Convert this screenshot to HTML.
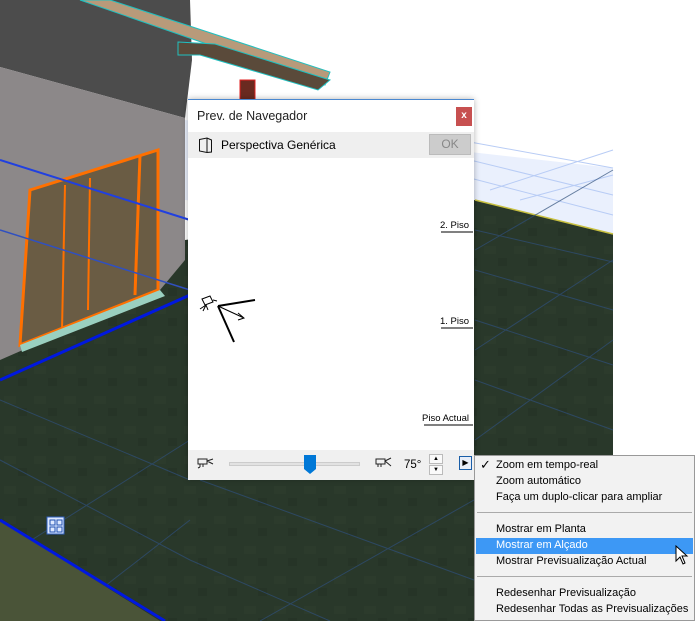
<!DOCTYPE html>
<html><head><meta charset="utf-8"><style>
*{margin:0;padding:0;box-sizing:border-box}
body{width:695px;height:621px;overflow:hidden;position:relative;background:#fff;font-family:"Liberation Sans","DejaVu Sans",sans-serif;font-size:12px;color:#000}
.abs{position:absolute}
.menu div.it{position:absolute;left:21px;font-size:11px;white-space:nowrap}
</style></head><body>
<svg class="abs" style="left:0;top:0" width="695" height="621">
<defs>
<pattern id="g" width="30" height="30" patternUnits="userSpaceOnUse"><rect width="30" height="30" fill="#29382a"/><rect x="4" y="6" width="12" height="8" fill="#2c3b2c"/><rect x="18" y="18" width="9" height="8" fill="#263427"/></pattern>
</defs>
<!-- light blue floor -->
<polygon points="185,120 613,168 613,240 185,200" fill="#eaf0fd"/>
<g stroke="#b8ccf5" stroke-width="1">
<line x1="470" y1="142" x2="613" y2="168"/><line x1="470" y1="160" x2="613" y2="195"/><line x1="470" y1="178" x2="613" y2="215"/><line x1="520" y1="200" x2="613" y2="175"/><line x1="490" y1="190" x2="613" y2="150"/>
</g>
<!-- grass -->
<polygon points="0,330 185,240 475,200 613,234 613,455 474,455 474,621 0,621" fill="url(#g)"/>
<line x1="475" y1="200" x2="613" y2="234" stroke="#c8c040" stroke-width="1.5"/>
<g stroke="#2f4f7a" stroke-width="1" opacity=".7">
<line x1="475" y1="230" x2="613" y2="262"/><line x1="475" y1="270" x2="613" y2="310"/><line x1="475" y1="320" x2="613" y2="365"/><line x1="475" y1="380" x2="613" y2="430"/><line x1="475" y1="250" x2="613" y2="170"/><line x1="475" y1="350" x2="613" y2="260"/><line x1="475" y1="440" x2="613" y2="340"/>
<line x1="0" y1="460" x2="190" y2="560"/><line x1="0" y1="400" x2="190" y2="480"/><line x1="60" y1="621" x2="190" y2="520"/><line x1="0" y1="560" x2="190" y2="440"/><line x1="200" y1="480" x2="474" y2="580"/><line x1="190" y1="560" x2="330" y2="621"/><line x1="260" y1="621" x2="474" y2="500"/>
</g>
<polygon points="0,520 160,621 0,621" fill="#4a5438"/>
<line x1="0" y1="520" x2="165" y2="621" stroke="#0018e0" stroke-width="3"/>
<!-- house -->
<polygon points="0,0 190,0 192,60 185,118 0,67" fill="#4c4c4c"/>
<polygon points="0,67 185,118 185,260 160,290 0,360" fill="#8c8889"/>
<polygon points="30,190 158,150 158,290 20,345" fill="#6a5c44"/>
<polygon points="30,190 158,150 158,290 20,345" fill="none" stroke="#ff7000" stroke-width="3"/>
<line x1="65" y1="185" x2="62" y2="330" stroke="#ff7000" stroke-width="2"/><line x1="90" y1="178" x2="88" y2="310" stroke="#ff7000" stroke-width="2"/><line x1="140" y1="155" x2="135" y2="295" stroke="#ff7000" stroke-width="3"/>
<polygon points="20,345 160,290 165,296 22,352" fill="#9ad0c0"/>
<line x1="0" y1="380" x2="190" y2="295" stroke="#0018e0" stroke-width="3"/>
<line x1="0" y1="160" x2="190" y2="220" stroke="#2040e0" stroke-width="2"/>
<line x1="0" y1="230" x2="190" y2="290" stroke="#3050c0" stroke-width="1.5"/>
<!-- roof -->
<polygon points="80,0 110,0 330,72 325,85" fill="#b89a7a" stroke="#20c0c0" stroke-width="1"/>
<polygon points="178,42 215,44 330,80 318,90 200,55 178,55" fill="#5a4a3a" stroke="#20c0c0" stroke-width="1"/>
<rect x="240" y="80" width="15" height="22" fill="#6a2a20" stroke="#e02020" stroke-width="1"/>
<rect x="47" y="517" width="17" height="17" fill="#dde8ff" stroke="#3060c0"/>
<rect x="50" y="520" width="5" height="5" fill="none" stroke="#2050b0"/><rect x="57" y="520" width="5" height="5" fill="none" stroke="#2050b0"/><rect x="50" y="527" width="5" height="5" fill="none" stroke="#2050b0"/><rect x="57" y="527" width="5" height="5" fill="none" stroke="#2050b0"/>
</svg>

<!-- dialog -->
<div class="abs" style="left:188px;top:99px;width:286px;height:380px;background:#fff;border-top:1px solid #4a88d0;box-shadow:0 0 6px rgba(0,0,0,.3)">
 <div class="abs" style="left:9px;top:9px;font-size:12.5px;color:#222">Prev. de Navegador</div>
 <div class="abs" style="left:268px;top:7px;width:16px;height:19px;background:#c75050;color:#fff;font-size:10px;font-weight:bold;text-align:center;line-height:18px">x</div>
 <div class="abs" style="left:0;top:32px;width:286px;height:26px;background:#efefef">
  <svg class="abs" style="left:10px;top:5px" width="16" height="17"><path d="M1.5 2.5 L9 1 L13.5 3 L13.5 15 L9 15.5 L1.5 14 Z M9 1 L9 15.5" fill="none" stroke="#111" stroke-width="1"/></svg>
  <div class="abs" style="left:33px;top:6px;font-size:12px">Perspectiva Genérica</div>
  <div class="abs" style="left:241px;top:2px;width:42px;height:21px;background:#ccc;border:1px solid #bbb;color:#888;text-align:center;line-height:19px">OK</div>
 </div>
 <svg class="abs" style="left:0;top:58px" width="286" height="292">
  <g stroke="#000" stroke-width="1">
   <line x1="253" y1="74" x2="285" y2="74"/><line x1="253" y1="170" x2="285" y2="170"/><line x1="236" y1="267" x2="285" y2="267"/>
  </g>
  <text x="252" y="70" font-size="9.5" font-family="Liberation Sans,sans-serif">2. Piso</text>
  <text x="252" y="166" font-size="9.5" font-family="Liberation Sans,sans-serif">1. Piso</text>
  <text x="234" y="263" font-size="9.5" font-family="Liberation Sans,sans-serif">Piso Actual</text>
  <g stroke="#000" fill="none">
   <path d="M30 148 L67 142 M30 148 L46 184" stroke-width="2"/>
   <path d="M30 148 L56 160 M50 155 L56 160 L50 162" stroke-width="1"/>
   <path d="M14 141 L22 138 L25 144 L17 147 Z M25 142 L29 143 M18 147 L15 153 M18 147 L20 152 M18 147 L12 151" stroke-width="1"/>
  </g>
 </svg>
 <div class="abs" style="left:0;top:350px;width:286px;height:30px;background:#f0f0f0">
  <svg class="abs" style="left:9px;top:7px" width="18" height="12"><path d="M1 2h9v5H1z M10 4l6-2 M10 4l6 3 M3 7v3 M6 7v3 M3 10l-2 1" fill="none" stroke="#222"/></svg>
  <div class="abs" style="left:41px;top:12px;width:131px;height:4px;background:#e2e2e2;border:1px solid #ccc"></div>
  <svg class="abs" style="left:116px;top:5px" width="12" height="19"><path d="M0 0h12v14l-6 5-6-5z" fill="#0078d7"/></svg>
  <svg class="abs" style="left:187px;top:7px" width="18" height="12"><path d="M1 2h9v5H1z M10 4l6-3 M10 4l6 5 M3 7v3 M6 7v3" fill="none" stroke="#222"/></svg>
  <div class="abs" style="left:216px;top:9px;font-size:11.5px">75°</div>
  <div class="abs" style="left:241px;top:4px;width:14px;height:10px;border:1px solid #bbb;background:#fafafa;font-size:6px;text-align:center;line-height:8px">▲</div>
  <div class="abs" style="left:241px;top:15px;width:14px;height:10px;border:1px solid #bbb;background:#fafafa;font-size:6px;text-align:center;line-height:8px">▼</div>
  <div class="abs" style="left:271px;top:6px;width:13px;height:14px;border:1px solid #1a5ea8;background:#e8eef8;font-size:8px;text-align:center;line-height:12px">▶</div>
 </div>
</div>

<!-- menu -->
<div class="abs menu" style="left:474px;top:455px;width:221px;height:166px;background:#f2f2f2;border:1px solid #999">
 <div class="abs" style="left:5px;top:1px;font-size:13px">✓</div>
 <div class="it" style="top:3px">Zoom em tempo-real</div>
 <div class="it" style="top:19px">Zoom automático</div>
 <div class="it" style="top:35px">Faça um duplo-clicar para ampliar</div>
 <div class="abs" style="left:2px;top:56px;width:215px;height:1px;background:#aaa"></div>
 <div class="it" style="top:67px">Mostrar em Planta</div>
 <div class="abs" style="left:1px;top:82px;width:217px;height:16px;background:#3d98f5"></div>
 <div class="it" style="top:83px;color:#fff">Mostrar em Alçado</div>
 <div class="it" style="top:99px">Mostrar Previsualização Actual</div>
 <div class="abs" style="left:2px;top:120px;width:215px;height:1px;background:#aaa"></div>
 <div class="it" style="top:131px">Redesenhar Previsualização</div>
 <div class="it" style="top:147px">Redesenhar Todas as Previsualizações</div>
 <svg class="abs" style="left:200px;top:89px" width="14" height="22"><path d="M1 1 L1 16 L5 12 L8 19 L10 18 L7 11 L12 11 Z" fill="#fff" stroke="#000"/></svg>
</div>
</body></html>
